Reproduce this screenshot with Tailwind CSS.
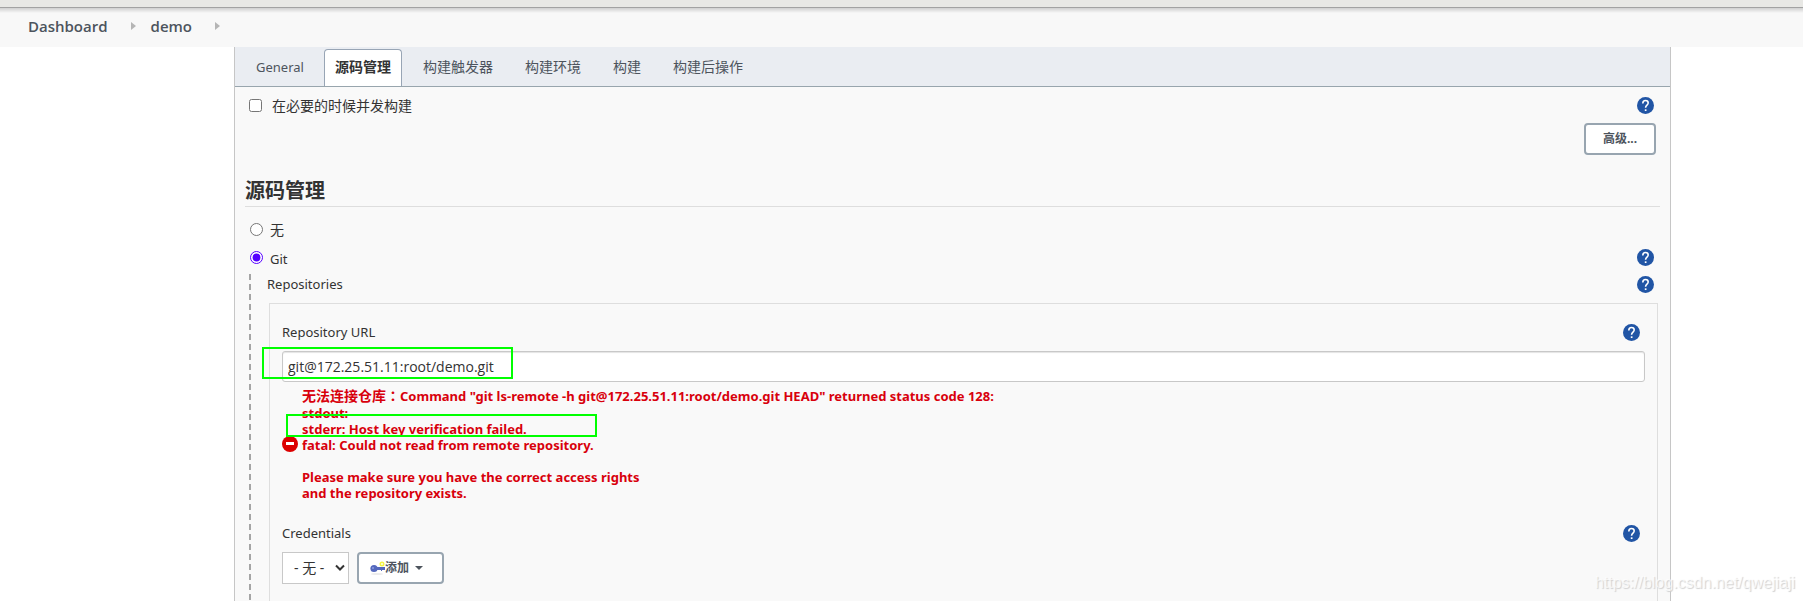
<!DOCTYPE html>
<html lang="zh-CN">
<head>
    <meta charset="UTF-8">
    <meta name="viewport" content="width=device-width, initial-scale=1.0">
    <title>demo Config</title>
    <script src="https://cdn.jsdelivr.net/npm/@tailwindcss/browser@4"></script>
</head>
<body class="relative min-h-screen flex flex-col bg-white font-['Noto_Sans','Noto_Sans_CJK_SC',sans-serif] text-[14px] leading-5 text-[#333]">
    <svg class="hidden">
        <symbol id="help" viewBox="0 0 24 24">
            <circle cx="12" cy="12" r="12" fill="#2155a5"/>
            <path d="M8.2 9.2C8.2 6.6 9.8 5 12 5s3.8 1.5 3.8 3.6c0 2.8-3.7 3-3.7 6.4" fill="none" stroke="#fff" stroke-width="2.2"/>
            <rect x="11" y="17.4" width="2.4" height="2.4" fill="#fff"/>
        </symbol>
    </svg>

    <div class="h-2 shrink-0 bg-[#e8e8e5] border-b border-[#a2a2a2]"></div>

    <!-- Breadcrumbs -->
    <nav class="h-[39px] shrink-0 flex items-center px-7 pb-1 bg-[linear-gradient(#d0d0d0,#f8f8f8_5px)] font-['Open_Sans',sans-serif] text-[15px] font-semibold text-[#4d545d]">
        <a href="#">Dashboard</a>
        <svg class="w-[5px] h-2 ml-[23px] mr-[15px]" viewBox="0 0 5 8"><path d="M0 0l5 4-5 4z" fill="#b5b5b5"/></svg>
        <a href="#">demo</a>
        <svg class="w-[5px] h-2 ml-[23px]" viewBox="0 0 5 8"><path d="M0 0l5 4-5 4z" fill="#b5b5b5"/></svg>
    </nav>

    <main class="flex-1 flex flex-col ml-[234px] mr-[132px] border-x border-[#c6c6c6] bg-[#f9f9f9]">
        <!-- Tabs -->
        <div class="h-10 flex items-end pl-[11px] bg-[#eaedf2] border-b border-[#98a5ad] text-[#4d545d]">
            <a href="#" class="h-[37px] px-[10px] pt-2 text-[13px]">General</a>
            <a href="#" class="h-[37px] ml-[10px] px-[10px] pt-[7px] bg-white border border-b-0 border-[#98a5b5] rounded-t font-bold text-[#333]">源码管理</a>
            <a href="#" class="h-[37px] ml-[11px] px-[10px] pt-2">构建触发器</a>
            <a href="#" class="h-[37px] ml-3 px-[10px] pt-2">构建环境</a>
            <a href="#" class="h-[37px] ml-3 px-[10px] pt-2">构建</a>
            <a href="#" class="h-[37px] ml-3 px-[10px] pt-2">构建后操作</a>
        </div>

        <form class="flex-1 flex flex-col px-[10px] pt-[7px]">
            <div class="flex items-center pl-1 pr-[6px]">
                <input type="checkbox" id="concurrent" class="size-[13px] mr-[10px]">
                <label for="concurrent" class="pt-[2px]">在必要的时候并发构建</label>
                <button type="button" aria-label="Help" class="ml-auto"><svg class="size-[17px]"><use href="#help"/></svg></button>
            </div>
            <div class="flex justify-end pt-[7px] pr-1">
                <button type="button" class="w-[72px] h-8 bg-white border-2 border-[#98a5b0] rounded text-[12px] leading-4 font-bold text-[#4d545d]">高级...</button>
            </div>

            <h2 class="mt-[22px] pb-[1px] border-b border-[#dedede] text-[20px] leading-7 font-bold">源码管理</h2>

            <div class="flex items-center mt-[11px] pl-[5px]">
                <input type="radio" id="scm-none" name="scm" class="size-[13px] mr-[7px]">
                <label for="scm-none" class="pt-[2px]">无</label>
            </div>
            <div class="flex items-center mt-[5px] pl-[5px] pr-[6px]">
                <input type="radio" id="scm-git" name="scm" checked class="size-[13px] mr-[7px] accent-[#5500ff]">
                <label for="scm-git" class="pt-1 text-[13px] leading-5">Git</label>
                <button type="button" aria-label="Help" class="ml-auto"><svg class="size-[17px]"><use href="#help"/></svg></button>
            </div>

            <div class="flex-1 flex mt-[5px]">
                <div class="w-[2px] ml-1 mr-4 bg-[repeating-linear-gradient(#a5a5a5_0_6px,transparent_6px_10px)]"></div>
                <div class="flex-1 flex flex-col">
                    <div class="flex items-center pr-[6px]">
                        <span class="text-[13px] leading-5">Repositories</span>
                        <button type="button" aria-label="Help" class="ml-auto"><svg class="size-[17px]"><use href="#help"/></svg></button>
                    </div>
                    <div class="flex-1 mt-[9px] ml-[2px] mr-[2px] px-3 pt-[18px] border border-b-0 border-[#dedede]">
                        <div class="flex items-center pr-[5px]">
                            <label for="repo-url" class="text-[13px] leading-5">Repository URL</label>
                            <button type="button" aria-label="Help" class="ml-auto"><svg class="size-[17px]"><use href="#help"/></svg></button>
                        </div>
                        <div class="relative mt-[9px]">
                            <input type="text" id="repo-url" value="git@172.25.51.11:root/demo.git" class="block w-full h-[31px] px-[5px] font-['Open_Sans',sans-serif] bg-white border border-[#c8c8c8] rounded-[3px] shadow-[inset_0_1px_1px_#e4e4e4]">
                            <div class="absolute -left-5 -top-1 w-[251px] h-8 border-2 border-[#00ff00]"></div>
                        </div>
                        <div class="relative flex items-center gap-1 mt-1 text-[13px] font-bold text-[#d8000c]">
                            <svg class="size-4 shrink-0" viewBox="0 0 16 16"><circle cx="8" cy="8" r="8" fill="#dc0000"/><rect x="4" y="6" width="8" height="3" fill="#fff"/></svg>
                            <div class="leading-4">
                                <p class="leading-[18px]"><span class="text-[14px]">无法连接仓库<span lang="zh-TW" class="font-['Noto_Sans_CJK_TC',sans-serif]">：</span></span>Command "git ls-remote -h git@172.25.51.11:root/demo.git HEAD" returned status code 128:</p>
                                <p>stdout:<br>stderr: Host key verification failed.<br>fatal: Could not read from remote repository.<br><br>Please make sure you have the correct access rights<br>and the repository exists.</p>
                            </div>
                            <div class="absolute left-1 top-7 w-[311px] h-[23px] border-2 border-[#00ff00]"></div>
                        </div>
                        <div class="flex items-center mt-[22px] pr-[5px]">
                            <label for="credentials" class="text-[13px] leading-5">Credentials</label>
                            <button type="button" aria-label="Help" class="ml-auto"><svg class="size-[17px]"><use href="#help"/></svg></button>
                        </div>
                        <div class="flex gap-2 mt-[9px]">
                            <div class="relative">
                                <select id="credentials" class="appearance-none w-[67px] h-8 pl-[11px] bg-white border border-[#c8c8c8]">
                                    <option>- 无 -</option>
                                </select>
                                <svg class="absolute right-1 top-3 w-[10px] h-2" viewBox="0 0 10 8"><path d="M1 1.5l4 4 4-4" fill="none" stroke="#333" stroke-width="2"/></svg>
                            </div>
                            <button type="button" class="flex items-center w-[87px] h-8 pl-[11px] bg-white border-2 border-[#98a5b0] rounded text-[12px] leading-4 font-bold text-[#4d545d]">
                                <svg class="w-[15px] h-4" viewBox="0 0 15 16">
                                    <ellipse cx="7" cy="14" rx="6" ry="1" fill="#ececec"/>
                                    <circle cx="12" cy="4" r="1.7" fill="none" stroke="#f5f542" stroke-width="1.6"/>
                                    <circle cx="4" cy="8.5" r="3.6" fill="#5468bd"/>
                                    <path d="M6 7h9v3h-3v1h-1v-1H6z" fill="#5468bd"/>
                                    <circle cx="3" cy="8" r="1" fill="#8d9ce0"/>
                                </svg>
                                添加
                                <svg class="w-2 h-1 ml-[6px]" viewBox="0 0 8 4"><path d="M0 0h8L4 4z" fill="#4d545d"/></svg>
                            </button>
                        </div>
                    </div>
                </div>
            </div>
        </form>
    </main>

    <div class="absolute right-2 bottom-2 font-['Liberation_Sans',sans-serif] text-[16px] text-white/70 [text-shadow:1px_1px_1px_#d0d0d0]">https://blog.csdn.net/qwejiaji</div>
</body>
</html>
